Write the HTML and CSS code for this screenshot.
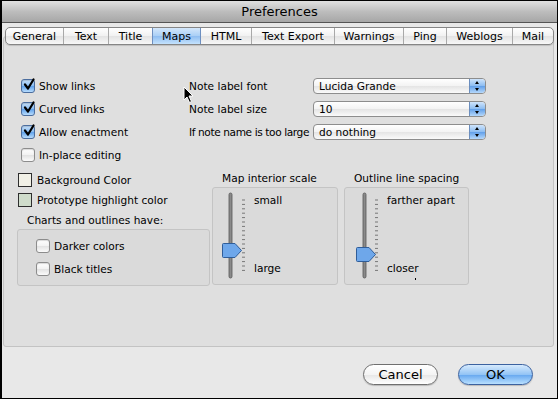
FILE: index.html
```html
<!DOCTYPE html>
<html lang="en">
<head>
    <meta charset="UTF-8">
    <title>Preferences</title>
    <link rel="stylesheet" href="styles.css">
</head>
<body>
    <div class="window">
        <div class="titlebar">Preferences</div>
        <div class="content">
            <div class="tabs">
                <span class="tab" style="width:58px">General</span>
                <span class="tab" style="width:45px">Text</span>
                <span class="tab" style="width:44px">Title</span>
                <span class="tab active" style="width:49px">Maps</span>
                <span class="tab" style="width:51px">HTML</span>
                <span class="tab" style="width:83px">Text Export</span>
                <span class="tab" style="width:69px">Warnings</span>
                <span class="tab" style="width:43px">Ping</span>
                <span class="tab" style="width:66px">Weblogs</span>
                <span class="tab" style="width:40px">Mail</span>
            </div>

            <div class="panel">
                <!-- Top: checkboxes and popups -->
                <div class="top-grid">
                    <label class="check"><span class="box checked"><svg viewBox="0 0 14 14"><path d="M3 6.5 L6 10.5 L11.5 1.5" /></svg></span>Show links</label>
                    <span class="field-label">Note label font</span>
                    <div class="popup"><span>Lucida Grande</span><span class="arrows"></span></div>

                    <label class="check"><span class="box checked"><svg viewBox="0 0 14 14"><path d="M3 6.5 L6 10.5 L11.5 1.5" /></svg></span>Curved links</label>
                    <span class="field-label">Note label size</span>
                    <div class="popup"><span>10</span><span class="arrows"></span></div>

                    <label class="check"><span class="box checked"><svg viewBox="0 0 14 14"><path d="M3 6.5 L6 10.5 L11.5 1.5" /></svg></span>Allow enactment</label>
                    <span class="field-label tight">If note name is too large</span>
                    <div class="popup"><span>do nothing</span><span class="arrows"></span></div>

                    <label class="check"><span class="box"></span>In-place editing</label>
                </div>

                <!-- Bottom: colors and sliders -->
                <div class="lower">
                    <div class="colors">
                        <div class="swatch-row"><span class="swatch bg"></span>Background Color</div>
                        <div class="swatch-row"><span class="swatch proto"></span>Prototype highlight color</div>
                        <div class="group-title">Charts and outlines have:</div>
                        <div class="group">
                            <label class="check"><span class="box"></span>Darker colors</label>
                            <label class="check"><span class="box"></span>Black titles</label>
                        </div>
                    </div>

                    <div class="slider-col">
                        <div class="slider-title">Map interior scale</div>
                        <div class="group slider-box map-scale">
                            <svg class="slider" width="26" height="88" viewBox="0 0 26 88">
                                <rect class="track" x="8" y="1" width="3" height="85" rx="1.5" />
                                <g class="ticks">
                                    <line x1="21" x2="24" y1="8" y2="8"/><line x1="21" x2="24" y1="12.4" y2="12.4"/><line x1="21" x2="24" y1="16.8" y2="16.8"/><line x1="21" x2="24" y1="21.2" y2="21.2"/><line x1="21" x2="24" y1="25.6" y2="25.6"/><line x1="21" x2="24" y1="30" y2="30"/><line x1="21" x2="24" y1="34.4" y2="34.4"/><line x1="21" x2="24" y1="38.8" y2="38.8"/><line x1="21" x2="24" y1="43.2" y2="43.2"/><line x1="21" x2="24" y1="47.6" y2="47.6"/><line x1="21" x2="24" y1="52" y2="52"/><line x1="21" x2="24" y1="56.4" y2="56.4"/><line x1="21" x2="24" y1="60.8" y2="60.8"/><line x1="21" x2="24" y1="65.2" y2="65.2"/><line x1="21" x2="24" y1="69.6" y2="69.6"/><line x1="21" x2="24" y1="74" y2="74"/><line x1="21" x2="24" y1="78.4" y2="78.4"/>
                                </g>
                                <path class="thumb" d="M2.5 51.5 H14 L20.5 58.5 L14 65.5 H2.5 Q1.5 65.5 1.5 64.5 V52.5 Q1.5 51.5 2.5 51.5 Z" />
                            </svg>
                            <div class="slider-labels">
                                <span>small</span>
                                <span>large</span>
                            </div>
                        </div>
                    </div>

                    <div class="slider-col">
                        <div class="slider-title">Outline line spacing</div>
                        <div class="group slider-box spacing">
                            <svg class="slider" width="26" height="88" viewBox="0 0 26 88">
                                <rect class="track" x="8" y="1" width="3" height="85" rx="1.5" />
                                <g class="ticks">
                                    <line x1="20" x2="23" y1="8" y2="8"/><line x1="20" x2="23" y1="12.4" y2="12.4"/><line x1="20" x2="23" y1="16.8" y2="16.8"/><line x1="20" x2="23" y1="21.2" y2="21.2"/><line x1="20" x2="23" y1="25.6" y2="25.6"/><line x1="20" x2="23" y1="30" y2="30"/><line x1="20" x2="23" y1="34.4" y2="34.4"/><line x1="20" x2="23" y1="38.8" y2="38.8"/><line x1="20" x2="23" y1="43.2" y2="43.2"/><line x1="20" x2="23" y1="47.6" y2="47.6"/><line x1="20" x2="23" y1="52" y2="52"/><line x1="20" x2="23" y1="56.4" y2="56.4"/><line x1="20" x2="23" y1="60.8" y2="60.8"/><line x1="20" x2="23" y1="65.2" y2="65.2"/><line x1="20" x2="23" y1="69.6" y2="69.6"/><line x1="20" x2="23" y1="74" y2="74"/><line x1="20" x2="23" y1="78.4" y2="78.4"/>
                                </g>
                                <path class="thumb" d="M2.5 55.5 H14 L20.5 62.5 L14 69.5 H2.5 Q1.5 69.5 1.5 68.5 V56.5 Q1.5 55.5 2.5 55.5 Z" />
                            </svg>
                            <div class="slider-labels">
                                <span>farther apart</span>
                                <span>closer<i class="dot"></i></span>
                            </div>
                        </div>
                    </div>
                </div>
            </div>

            <div class="buttons">
                <button class="btn">Cancel</button>
                <button class="btn default">OK</button>
            </div>
        </div>

        <!-- mouse pointer -->
        <svg class="cursor" width="12" height="18" viewBox="0 0 12 18">
            <path d="M1 1 V14 L4 11 L6.5 16.5 L8.5 15.5 L6 10 H10 Z" fill="#000" stroke="#fff" stroke-width="1" />
        </svg>
    </div>
</body>
</html>
```

FILE: styles.css
```css
* {
    margin: 0;
    padding: 0;
    box-sizing: border-box;
}
body {
    background: #000;
    font-family: "DejaVu Sans", "Liberation Sans", sans-serif;
    font-size: 10.6px;
    color: #000;
}
.window {
    position: relative;
    width: 558px;
    height: 399px;
    border: 1px solid #000;
    border-left-width: 2px;
    background: #e8e8e8;
    overflow: hidden;
}
/* Title bar */
.titlebar {
    height: 22px;
    line-height: 21px;
    text-align: center;
    font-size: 13px;
    background: linear-gradient(#e0e0e0, #bdbdbd 50%, #a7a7a7);
    border-bottom: 1px solid #555;
}
.content {
    padding: 4px 3px 0 1px;
}
/* Tabs */
.tabs {
    position: relative;
    z-index: 2;
    display: flex;
    width: max-content;
    margin: 0 0 -9px 2px;
    height: 18px;
    border: 1px solid #858585;
    border-radius: 5px;
    background: linear-gradient(#ffffff, #f1f1f1 50%, #e3e3e3 51%, #f7f7f7);
    box-shadow: 0 1px 1px rgba(0, 0, 0, 0.15);
    overflow: hidden;
}
.tab {
    display: flex;
    justify-content: center;
    align-items: center;
    font-size: 11px;
    border-right: 1px solid #a9a9a9;
}
.tab:last-child {
    border-right: none;
}
.tab.active {
    background: linear-gradient(#d4e7fb, #a9cff6 50%, #8ebdf1 51%, #c4e2fd);
    border-left: 1px solid #6d8fc0;
    border-right: 1px solid #6d8fc0;
    margin-left: -1px;
}
/* Panel */
.panel {
    height: 311px;
    border: 1px solid #c3c3c3;
    border-radius: 3px;
    background: #dfdfdf;
    padding: 37px 0 0 13px;
}
.top-grid {
    display: grid;
    grid-template-columns: 168px 124px 173px;
    grid-auto-rows: 23px;
    align-items: center;
    padding-left: 4px;
}
.check {
    display: flex;
    align-items: center;
    gap: 4px;
    white-space: nowrap;
}
.box {
    width: 14px;
    height: 14px;
    border: 1px solid #8c8c8c;
    border-radius: 3px;
    background: linear-gradient(#ffffff, #f2f2f2 50%, #e2e2e2 51%, #fbfbfb);
    box-shadow: inset 0 1px 1px rgba(0, 0, 0, 0.15);
    flex-shrink: 0;
}
.box.checked {
    border-color: #4b6d9e;
    background: linear-gradient(#c6e0fa, #89bcf1 50%, #5ea1ec 51%, #b8dcfc);
}
.box svg {
    display: block;
    width: 14px;
    height: 14px;
    margin: -2px 0 0 0;
}
.box svg path {
    fill: none;
    stroke: #000;
    stroke-width: 2.2;
    stroke-linecap: round;
    stroke-linejoin: round;
}
.field-label {
    white-space: nowrap;
}
.field-label.tight {
    letter-spacing: -0.4px;
}
/* Popup buttons */
.popup {
    display: flex;
    align-items: center;
    justify-content: space-between;
    height: 16px;
    border: 1px solid #8d8d8d;
    border-radius: 4px;
    background: linear-gradient(#ffffff, #f3f3f3 50%, #e4e4e4 51%, #fafafa);
    padding-left: 5px;
    overflow: hidden;
}
.arrows {
    position: relative;
    width: 16px;
    height: 14px;
    background: linear-gradient(#cfe4fb, #8bbcf1 50%, #619fe9 51%, #b5d8fb);
    border-left: 1px solid #6b8ebe;
    border-radius: 0 3px 3px 0;
}
.arrows::before,
.arrows::after {
    content: "";
    position: absolute;
    left: 5px;
    border-left: 2.5px solid transparent;
    border-right: 2.5px solid transparent;
}
.arrows::before {
    top: 2px;
    border-bottom: 3px solid #000;
}
.arrows::after {
    bottom: 2px;
    border-top: 3px solid #000;
}
/* Lower section */
.lower {
    display: flex;
    margin-top: 4px;
}
.colors {
    width: 193px;
}
.swatch-row {
    display: flex;
    align-items: center;
    gap: 5px;
    height: 20px;
    padding-left: 1px;
}
.swatch {
    width: 14px;
    height: 14px;
    border: 1px solid #2e2e2e;
}
.swatch.bg {
    background: #f1f0e6;
}
.swatch.proto {
    background: #cfdccb;
}
.group-title {
    height: 18px;
    line-height: 20px;
    padding-left: 10px;
    margin-bottom: 1px;
}
.group {
    border: 1px solid #c4c4c4;
    border-radius: 3px;
    background: #dadada;
}
.colors .group {
    height: 57px;
    padding: 4px 0 0 18px;
}
.colors .group .check {
    height: 23px;
}
.slider-col {
    margin-left: 2px;
}
.slider-col + .slider-col {
    margin-left: 6px;
}
.slider-title {
    height: 17px;
    line-height: 17px;
    padding-left: 10px;
}
.slider-box {
    display: flex;
    width: 126px;
    height: 98px;
}
.spacing {
    width: 125px;
}
.slider {
    display: block;
    margin: 4px 0 0 8px;
}
.spacing .slider {
    margin-left: 10px;
}
.track {
    fill: #8a8a8a;
    stroke: #555;
    stroke-width: 0.8;
}
.ticks line {
    stroke: #777;
    stroke-width: 1;
}
.thumb {
    fill: #6ea7ea;
    stroke: #2f5d99;
    stroke-width: 1;
}
.slider-labels {
    display: flex;
    flex-direction: column;
    justify-content: space-between;
    padding: 6px 0 10px 7px;
}
.spacing .slider-labels {
    padding-left: 6px;
}
.dot {
    display: inline-block;
    width: 1px;
    height: 2px;
    background: #000;
    margin: 0 0 -6px -4px;
    vertical-align: bottom;
}
/* Dialog buttons */
.buttons {
    display: flex;
    justify-content: flex-end;
    gap: 20px;
    padding-right: 21px;
    margin-top: 17px;
}
.btn {
    width: 75px;
    height: 21px;
    border: 1px solid #6f6f6f;
    border-radius: 11px;
    font-family: inherit;
    font-size: 13px;
    background: linear-gradient(#ffffff, #f4f4f4 50%, #e6e6e6 51%, #ffffff);
    box-shadow: 0 1px 1px rgba(0, 0, 0, 0.2);
}
.btn.default {
    border-color: #3c62a0;
    background: linear-gradient(#d6eafd, #93c4f5 50%, #64a6ef 51%, #b9e0ff);
}
.cursor {
    position: absolute;
    left: 181px;
    top: 85px;
}
```
